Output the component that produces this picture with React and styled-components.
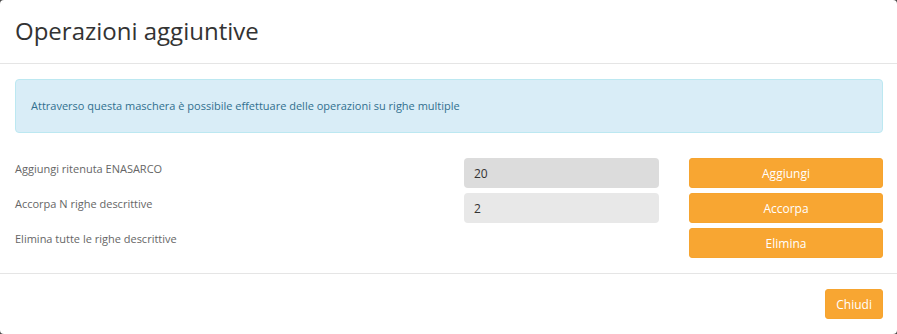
import React, { useState } from 'react';
import styled, { createGlobalStyle } from 'styled-components';

const GlobalStyle = createGlobalStyle`
  html, body {
    margin: 0;
    padding: 0;
    background: #4a4a4a;
  }
  body {
    font-family: "Open Sans", "Liberation Sans", sans-serif;
    font-size: 11px;
    color: #333;
  }
  * {
    box-sizing: border-box;
  }
`;

const Modal = styled.div`
  width: 897px;
  height: 334px;
  background: #fff;
  border-radius: 4px;
  overflow: hidden;
  display: flex;
  flex-direction: column;
`;

const Header = styled.div`
  height: 64px;
  padding: 0 15px;
  border-bottom: 1px solid #e5e5e5;
  display: flex;
  align-items: center;
`;

const Title = styled.h4`
  margin: 0;
  font-size: 24px;
  font-weight: 400;
  color: #333;
  line-height: 30px;
  padding-bottom: 2px;
`;

const Body = styled.div`
  padding: 15px 14px 15px 15px;
  border-bottom: 1px solid #e5e5e5;
`;

const Alert = styled.div`
  background: #d9edf7;
  border: 1px solid #bce8f1;
  border-radius: 4px;
  color: #31708f;
  padding: 15px;
  line-height: 22px;
  margin-bottom: 25px;
`;

const Grid = styled.div`
  display: grid;
  grid-template-columns: 1fr 195px 194px;
  column-gap: 30px;
  row-gap: 5px;
`;

const Label = styled.div`
  color: #666;
  line-height: 17px;
  padding-top: 2px;
`;

const Input = styled.input`
  height: 30px;
  border: none;
  border-radius: 4px;
  background: ${(p) => (p.$active ? '#dcdcdc' : '#e8e8e8')};
  padding: 0 10px;
  font-family: inherit;
  font-size: 12px;
  color: #333;
  outline: none;
  width: 100%;
`;

const Button = styled.button`
  height: 30px;
  border: 1px solid #f6a42f;
  border-radius: 3px;
  background: #f8a632;
  color: #fff;
  font-family: inherit;
  font-size: 12px;
  padding: 0 10px;
  cursor: pointer;
  width: ${(p) => (p.$auto ? 'auto' : '100%')};
`;

const Footer = styled.div`
  flex: 1;
  padding: 15px 14px 15px 15px;
  display: flex;
  justify-content: flex-end;
  align-items: flex-start;
`;

export default function App() {
  const [ritenuta, setRitenuta] = useState('20');
  const [righe, setRighe] = useState('2');

  return (
    <>
      <GlobalStyle />
      <Modal>
        <Header>
          <Title>Operazioni aggiuntive</Title>
        </Header>
        <Body>
          <Alert>Attraverso questa maschera è possibile effettuare delle operazioni su righe multiple</Alert>
          <Grid>
            <Label>Aggiungi ritenuta ENASARCO</Label>
            <Input $active value={ritenuta} onChange={(e) => setRitenuta(e.target.value)} />
            <Button>Aggiungi</Button>

            <Label>Accorpa N righe descrittive</Label>
            <Input value={righe} onChange={(e) => setRighe(e.target.value)} />
            <Button>Accorpa</Button>

            <Label>Elimina tutte le righe descrittive</Label>
            <div />
            <Button>Elimina</Button>
          </Grid>
        </Body>
        <Footer>
          <Button $auto>Chiudi</Button>
        </Footer>
      </Modal>
    </>
  );
}
